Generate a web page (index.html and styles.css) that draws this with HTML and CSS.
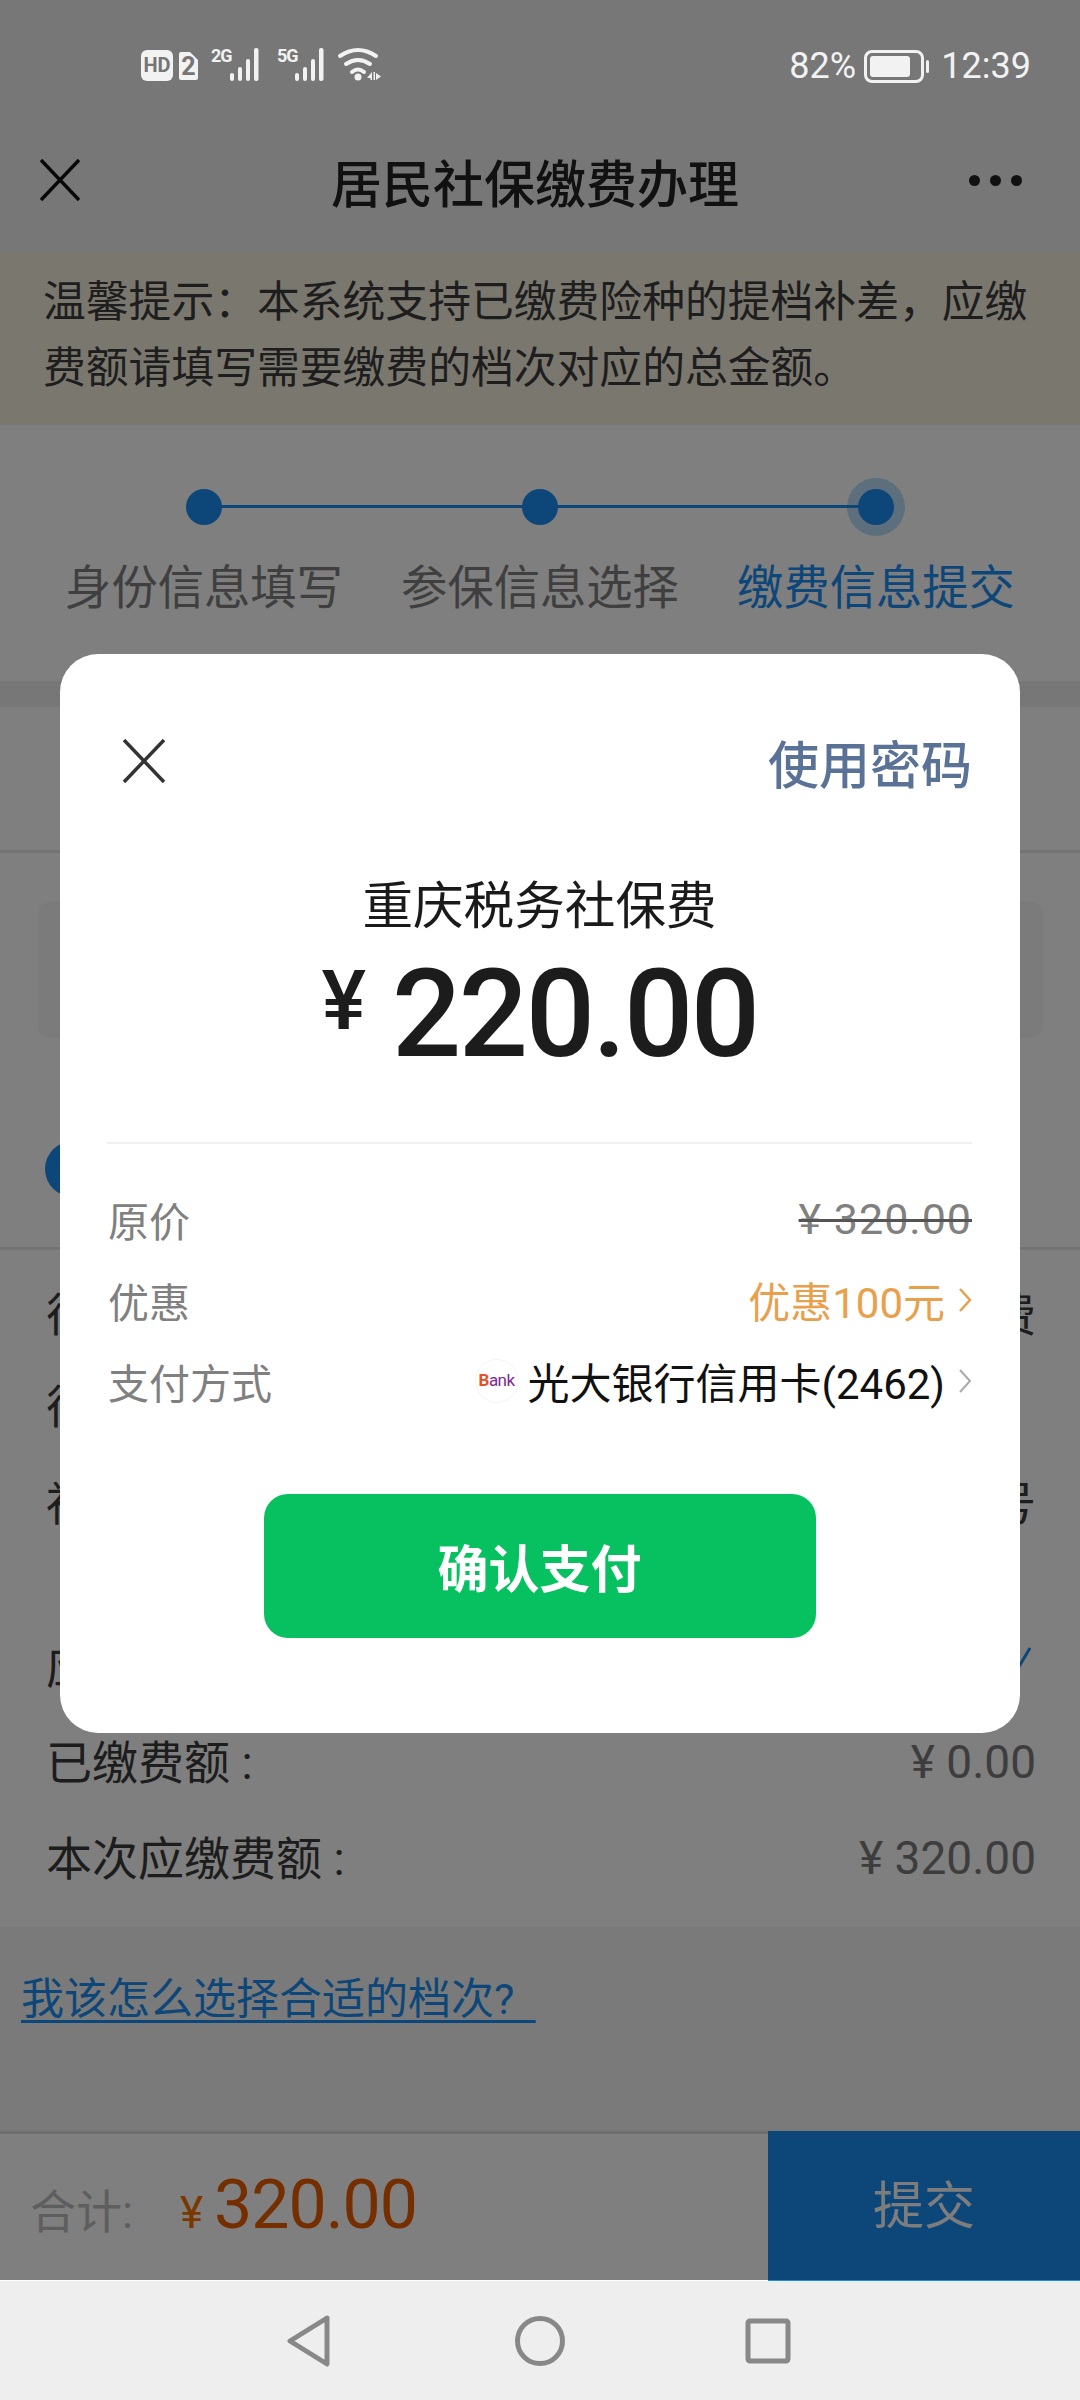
FILE: index.html
```html
<!DOCTYPE html>
<html>
<head>
  <meta charset="utf-8">
  <title>居民社保缴费办理</title>
  <link rel="stylesheet" href="styles.css">
</head>
<body>
  <div class="phone">
    <div class="status">
      <svg class="status-icons" width="250" height="50" viewBox="0 -6 250 50">
        <rect x="1" y="3" width="32" height="31" rx="6" fill="#f2f2f2"/>
        <text x="17" y="25" class="ic-hd" text-anchor="middle">HD</text>
        <path d="M39 7q0-2 2-2h9l8 8v18q0 2-2 2H41q-2 0-2-2z" fill="#f2f2f2"/>
        <text x="48.500" y="28" class="ic-two" text-anchor="middle">2</text>
        <text x="71" y="15" class="ic-net">2G</text>
        <g fill="#f2f2f2">
          <rect x="90" y="26" width="4" height="8" rx="2"/>
          <rect x="98" y="20" width="4" height="14" rx="2"/>
          <rect x="106" y="12" width="4" height="22" rx="2"/>
          <rect x="114" y="1" width="4.500" height="33" rx="2"/>
        </g>
        <text x="137" y="15" class="ic-net">5G</text>
        <g fill="#f2f2f2">
          <rect x="155" y="26" width="4" height="8" rx="2"/>
          <rect x="163" y="20" width="4" height="14" rx="2"/>
          <rect x="171" y="12" width="4" height="22" rx="2"/>
          <rect x="179" y="1" width="4.500" height="33" rx="2"/>
        </g>
        <g fill="none" stroke="#f2f2f2" stroke-width="4" stroke-linecap="round">
          <path d="M200 9q18-12 36 0"/>
          <path d="M206 17q12-8 24 0"/>
          <path d="M212 25q6-5 12 0"/>
        </g>
        <circle cx="218" cy="30" r="3.500" fill="#f2f2f2"/>
        <path d="M227 31l5-6v8h-1.500v-2zM233.500 25h1.500l0 8h-1.500zM236 26l5 3.500-5 3.500z" fill="#f2f2f2"/>
      </svg>
      <div class="status-right">
        <span class="pct">82%</span>
        <span class="battery"><span class="battery-level"></span></span>
        <span class="time">12:39</span>
      </div>
    </div>

    <header class="topbar">
      <svg class="x-icon" width="42" height="42" viewBox="0 0 42 42"><path d="M2 1l38 40M40 1L2 41" stroke="#111" stroke-width="3.500" fill="none"/></svg>
      <h1 class="title">居民社保缴费办理</h1>
      <div class="more"><i></i><i></i><i></i></div>
    </header>

    <div class="notice">温馨提示：本系统支持已缴费险种的提档补差，应缴费额请填写需要缴费的档次对应的总金额。</div>

    <section class="steps">
      <div class="step"><span class="dot"></span><span class="step-label">身份信息填写</span></div>
      <div class="step"><span class="dot"></span><span class="step-label">参保信息选择</span></div>
      <div class="step active"><span class="dot"></span><span class="step-label">缴费信息提交</span></div>
    </section>

    <section class="tabs"></section>

    <section class="choose">
      <div class="choose-card"></div>
      <span class="choose-dot"></span>
    </section>

    <section class="details">
      <div class="row row-a"><span>征</span><span>费</span></div>
      <div class="row row-b"><span>征</span></div>
      <div class="row row-c"><span>社</span><span>号</span></div>
      <div class="row row-d"><span>应</span><svg class="pencil" width="16" height="24" viewBox="0 0 16 24"><path d="M15 1L2 23" stroke="#1a8cf0" stroke-width="3" fill="none"/></svg></div>
      <div class="row row-e"><span>已缴费额 :</span><span class="val">¥ 0.00</span></div>
      <div class="row row-f"><span>本次应缴费额 :</span><span class="val">¥ 320.00</span></div>
    </section>

    <section class="help">
      <a class="help-link">我该怎么选择合适的档次?&nbsp;&nbsp;</a>
    </section>

    <footer class="bottom">
      <div class="total">
        <span class="total-label">合计:</span>
        <span class="total-sign">¥</span>
        <span class="total-num">320.00</span>
      </div>
      <div class="submit">提交</div>
    </footer>

    <nav class="navbar">
      <svg width="46" height="52" viewBox="0 0 46 52"><path d="M41 3L4 26l37 23z" fill="none" stroke="#888" stroke-width="5" stroke-linejoin="round"/></svg>
      <svg width="52" height="52" viewBox="0 0 52 52"><circle cx="26" cy="26" r="22.500" fill="none" stroke="#888" stroke-width="5"/></svg>
      <svg width="46" height="46" viewBox="0 0 46 46"><rect x="3" y="3" width="40" height="40" rx="2" fill="none" stroke="#888" stroke-width="5"/></svg>
    </nav>

    <div class="scrim"></div>

    <div class="modal">
      <div class="modal-top">
        <svg width="44" height="44" viewBox="0 0 44 44"><path d="M2 1l40 42M42 1L2 43" stroke="#333" stroke-width="3.500" fill="none"/></svg>
        <span class="use-pwd">使用密码</span>
      </div>
      <div class="pay-name">重庆税务社保费</div>
      <div class="amount"><span class="amount-sign">¥</span><span class="amount-num">220.00</span></div>
      <div class="divider"></div>
      <div class="pay-row">
        <span class="pay-label">原价</span>
        <span class="old-price">¥ 320.00</span>
      </div>
      <div class="pay-row">
        <span class="pay-label">优惠</span>
        <span class="pay-right">
          <span class="discount">优惠100元</span>
          <svg class="chev" width="14" height="26" viewBox="0 0 14 26"><path d="M2 2l10 11L2 24" fill="none" stroke="#e8a04f" stroke-width="2.500"/></svg>
        </span>
      </div>
      <div class="pay-row">
        <span class="pay-label">支付方式</span>
        <span class="pay-right">
          <span class="bank-logo"><b>B</b>ank</span>
          <span class="bank-name">光大银行信用卡(2462)</span>
          <svg class="chev" width="14" height="26" viewBox="0 0 14 26"><path d="M2 2l10 11L2 24" fill="none" stroke="#aaa" stroke-width="2"/></svg>
        </span>
      </div>
      <div class="confirm">确认支付</div>
    </div>
  </div>
</body>
</html>
```

FILE: styles.css
```css
* {
  box-sizing: border-box;
}
body {
  margin: 0;
  font-family: Roboto, "Noto Sans CJK SC", sans-serif;
  background: #eee;
}
.phone {
  position: relative;
  width: 1080px;
  height: 2400px;
  overflow: hidden;
  display: flex;
  flex-direction: column;
}

/* status bar sits above the scrim */
.status {
  position: relative;
  z-index: 2;
  height: 125px;
  flex: none;
  display: flex;
  justify-content: space-between;
  padding: 41px 49px 0 140px;
}
.status-icons {
  display: block;
}
.ic-hd {
  font: 700 20px Roboto, sans-serif;
  fill: #757575;
}
.ic-two {
  font: 700 25px Roboto, sans-serif;
  fill: #757575;
}
.ic-net {
  font: 700 18px Roboto, sans-serif;
  letter-spacing: -1px;
  fill: #f2f2f2;
}
.status-right {
  display: flex;
  align-items: center;
  height: 38px;
  margin-top: 6px;
  color: #f2f2f2;
  font-size: 36px;
}
.pct {
  width: 75px;
}
.battery {
  position: relative;
  width: 60px;
  height: 33px;
  border: 3px solid #f2f2f2;
  border-radius: 8px;
  padding: 3px;
  margin-right: 17px;
}
.battery::after {
  content: "";
  position: absolute;
  right: -8px;
  top: 7px;
  width: 3px;
  height: 13px;
  background: #f2f2f2;
  border-radius: 2px;
}
.battery-level {
  display: block;
  width: 82%;
  height: 100%;
  background: #f2f2f2;
  border-radius: 3px;
}

.topbar {
  height: 127px;
  flex: none;
  display: flex;
  align-items: center;
  justify-content: space-between;
  padding: 0 58px 16px 39px;
  background: transparent;
}
.x-icon {
  margin-top: -2px;
}
.title {
  margin: 0 0 0 20px;
  font-size: 51px;
  font-weight: 500;
  color: #222;
}
.more {
  display: flex;
  gap: 10px;
}
.more i {
  width: 11px;
  height: 11px;
  border-radius: 50%;
  background: #222;
}

.notice {
  height: 173px;
  flex: none;
  padding: 17px 40px 0 43px;
  font-size: 42.800px;
  line-height: 66px;
  color: #3d3d3d;
  background: #f5f1dd;
}

.steps {
  height: 256px;
  flex: none;
  display: flex;
  justify-content: center;
  gap: 60px;
  padding-top: 64px;
  background: #fff;
}
.step {
  position: relative;
  width: 276px;
  display: flex;
  flex-direction: column;
  align-items: center;
}
.step + .step::before {
  content: "";
  position: absolute;
  left: -198px;
  right: 138px;
  top: 16px;
  height: 3px;
  background: #1a8cf0;
}
.dot {
  position: relative;
  width: 36px;
  height: 36px;
  border-radius: 50%;
  background: #1a8cf0;
}
.step.active .dot {
  box-shadow: 0 0 0 11px rgba(26, 140, 240, 0.3);
}
.step-label {
  margin-top: 33px;
  font-size: 46.300px;
  line-height: 60px;
  white-space: nowrap;
  color: #7f7f7f;
}
.step.active .step-label {
  color: #1a8cf0;
}

.tabs {
  height: 146px;
  flex: none;
  margin-top: 26px;
  background: #fff;
  border-bottom: 3px solid #e8e8e8;
}

.choose {
  height: 397px;
  flex: none;
  padding: 49px 37px 0 38px;
  background: #fff;
  border-bottom: 3px solid #e8e8e8;
}
.choose-card {
  height: 136px;
  border-radius: 12px;
  background: #f6f6f6;
}
.choose-dot {
  display: block;
  width: 56px;
  height: 56px;
  margin: 103px 0 0 7px;
  border-radius: 50%;
  background: #1a8cf0;
}

.details {
  height: 677px;
  flex: none;
  padding: 0 44px 0 46px;
  background: #fff;
  color: #3a3a3a;
}
.row {
  display: flex;
  justify-content: space-between;
  align-items: center;
  height: 60px;
  font-size: 46px;
  white-space: nowrap;
}
.row-a { margin-top: 31px; }
.row-b { margin-top: 32px; }
.row-c { margin-top: 37px; }
.row-d { margin-top: 103px; }
.row-e { margin-top: 36px; }
.row-f { margin-top: 36px; }
.row .val {
  padding-top: 6px;
  font-size: 46px;
  color: #7a7a7a;
}
.pencil {
  margin: 0 5px 8px 0;
}

.help {
  height: 204px;
  flex: none;
  padding: 43px 0 0 21px;
  background: #f4f4f4;
}
.help-link {
  font-size: 43px;
  line-height: 58px;
  display: inline-block;
  color: #1a8cf0;
  text-decoration: underline;
  text-decoration-thickness: 3px;
  text-underline-offset: 6px;
}

.bottom {
  height: 150px;
  flex: none;
  display: flex;
  justify-content: space-between;
  background: #fff;
  border-top: 3px solid #ddd;
}
.total {
  display: flex;
  align-items: baseline;
  padding: 31px 0 0 30px;
}
.total-label {
  font-size: 46px;
  color: #bcbcbc;
  width: 150px;
}
.total-sign {
  font-size: 44px;
  color: #f07000;
  width: 34px;
}
.total-num {
  font-size: 68px;
  letter-spacing: -1px;
  color: #e85c00;
}
.submit {
  width: 312px;
  margin-top: -3px;
  display: flex;
  align-items: center;
  justify-content: center;
  font-size: 51px;
  padding-bottom: 8px;
  color: #fafafa;
  background: #1a8cf0;
  position: relative;
}

.navbar {
  height: 120px;
  flex: none;
  display: flex;
  align-items: center;
  justify-content: center;
  gap: 0;
  padding-right: 3px;
  background: #eee;
}
.navbar svg:nth-child(1) { margin-right: 182px; }
.navbar svg:nth-child(3) { margin-left: 179px; }

.scrim {
  position: absolute;
  left: 0;
  top: 0;
  width: 1080px;
  height: 2280px;
  background: rgba(0, 0, 0, 0.5);
}

.modal {
  position: absolute;
  left: 60px;
  top: 654px;
  width: 960px;
  height: 1079px;
  padding: 0 48px 0 47px;
  background: #fff;
  border-radius: 38px;
}
.modal-top {
  display: flex;
  justify-content: space-between;
  align-items: center;
  height: 60px;
  margin-top: 79px;
  padding-left: 15px;
}
.modal-top svg {
  margin-top: -4px;
}
.use-pwd {
  margin-top: 8px;
  font-size: 51px;
  font-weight: 500;
  line-height: 60px;
  color: #5b7297;
}
.pay-name {
  margin-top: 84px;
  font-size: 50.600px;
  line-height: 60px;
  text-align: center;
  color: #1a1a1a;
}
.amount {
  display: flex;
  align-items: flex-start;
  justify-content: center;
  height: 130px;
  margin-top: 13px;
  color: #1c1c1c;
}
.amount-sign {
  margin: 6px 26px 0 0;
  font-size: 84px;
  line-height: 90px;
  font-weight: 500;
}
.amount-num {
  font-size: 122px;
  line-height: 130px;
  letter-spacing: -2.500px;
  font-weight: 500;
}
.divider {
  height: 2px;
  margin-top: 62px;
  background: #f0f0f0;
}
.pay-row {
  display: flex;
  justify-content: space-between;
  align-items: center;
  height: 81px;
  font-size: 42px;
}
.divider + .pay-row {
  margin-top: 34px;
}
.pay-label {
  margin-left: 1px;
  font-size: 41px;
  color: #808080;
}
.pay-right {
  display: flex;
  align-items: center;
}
.old-price {
  font-size: 43px;
  letter-spacing: 1px;
  color: #808080;
  text-decoration: line-through;
  text-decoration-color: #555;
  text-decoration-thickness: 3px;
}
.discount {
  color: #e9a04d;
}
.chev {
  margin-left: 13px;
}
.bank-logo {
  width: 44px;
  height: 44px;
  margin-right: 9px;
  border: 1px solid #f4f4f4;
  border-radius: 50%;
  display: flex;
  align-items: center;
  justify-content: center;
  font-size: 17px;
  line-height: 1;
  letter-spacing: -0.5px;
  color: #7d2a8e;
}
.bank-logo b {
  color: #e8502a;
}
.bank-name {
  color: #111;
}
.confirm {
  width: 552px;
  height: 144px;
  margin: 73px auto 0;
  border-radius: 24px;
  background: #07c160;
  color: #fff;
  font-size: 51px;
  font-weight: 700;
  display: flex;
  align-items: center;
  justify-content: center;
}
```
